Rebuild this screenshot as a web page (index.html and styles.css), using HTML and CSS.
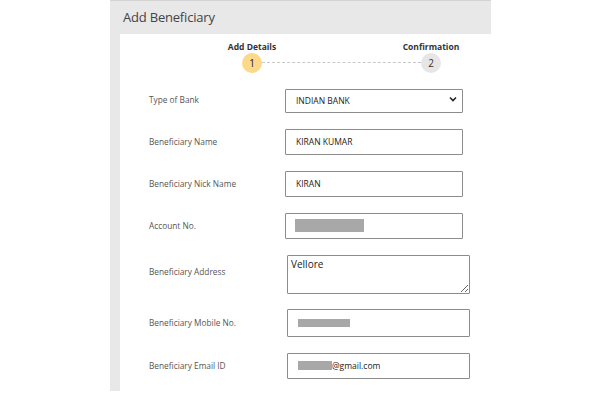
FILE: index.html
```html
<!DOCTYPE html>
<html>
<head>
<meta charset="utf-8">
<link rel="stylesheet" href="styles.css">
</head>
<body>
<div class="page">
  <div class="header"><h1 class="title">Add Beneficiary</h1></div>
  <div class="main">
    <div class="stepper">
      <div class="step">
        <div class="step-label">Add Details</div>
        <div class="step-circle active">1</div>
      </div>
      <div class="step-line"></div>
      <div class="step">
        <div class="step-label">Confirmation</div>
        <div class="step-circle">2</div>
      </div>
    </div>
    <form class="form">
      <div class="row r-bank">
        <label class="label">Type of Bank</label>
        <div class="select-wrap">
          <select class="field select"><option>INDIAN BANK</option></select>
          <svg class="chev" width="8" height="6" viewBox="0 0 8 6"><path d="M1 1.5 L4 4.5 L7 1.5" fill="none" stroke="#222" stroke-width="1.6"/></svg>
        </div>
      </div>
      <div class="row">
        <label class="label">Beneficiary Name</label>
        <div class="field input">KIRAN KUMAR</div>
      </div>
      <div class="row">
        <label class="label">Beneficiary Nick Name</label>
        <div class="field input">KIRAN</div>
      </div>
      <div class="row">
        <label class="label">Account No.</label>
        <div class="field input"><span class="mask mask-acc"></span></div>
      </div>
      <div class="row r-addr">
        <label class="label">Beneficiary Address</label>
        <textarea class="field textarea">Vellore</textarea>
      </div>
      <div class="row r-mob">
        <label class="label">Beneficiary Mobile No.</label>
        <div class="field input wide tall"><span class="mask mask-mob"></span></div>
      </div>
      <div class="row r-mail">
        <label class="label">Beneficiary Email ID</label>
        <div class="field input wide"><span class="mask mask-mail"></span>@gmail.com</div>
      </div>
    </form>
  </div>
</div>
</body>
</html>
```
FILE: styles.css
```css
* { box-sizing: border-box; }
html, body { margin: 0; padding: 0; background: #fff; }
body { font-family: "Open Sans", "Noto Sans", sans-serif; color: #333; }

.page { margin-left: 110px; width: 490px; }

.header {
  width: 381px;
  height: 34px;
  background: #e8e8e8;
  border-top: 1px solid #d4d4d4;
  padding: 7px 0 0 13px;
}
.title {
  margin: 0;
  font-weight: 400;
  font-size: 13px;
  letter-spacing: -0.2px;
  line-height: 18px;
  color: #444;
}

.main {
  height: 357px;
  border-left: 10px solid #e8e8e8;
  padding-top: 7px;
}

.stepper {
  position: relative;
  display: flex;
  margin-left: 92px;
  width: 259px;
}
.step {
  width: 80px;
  display: flex;
  flex-direction: column;
  align-items: center;
  position: relative;
  z-index: 1;
}
.step-line {
  flex: 1;
  align-self: flex-end;
  height: 11px;
  margin: 0 -30px;
  border-top: 1px dashed #c8c8c8;
}
.step-label {
  font-size: 8.5px;
  font-weight: 700;
  color: #333;
  line-height: 11px;
}
.step-circle {
  margin-top: 1px;
  width: 20px;
  height: 20px;
  border-radius: 50%;
  background: #e6e6e6;
  color: #333;
  font-size: 10px;
  display: flex;
  align-items: center;
  justify-content: center;
}
.step-circle.active { background: #fcd98a; color: #222; }

.form {
  margin-top: 14px;
  padding-left: 29px;
  display: flex;
  flex-direction: column;
  gap: 16px;
}
.row {
  display: flex;
  align-items: center;
}
.label {
  width: 136px;
  font-size: 8.3px;
  color: #555;
}
.field {
  font-family: "Open Sans", "Noto Sans", sans-serif;
  border: 1px solid #8c8c8c;
  border-radius: 1px;
  background: #fff;
  color: #222;
}
.input {
  width: 178px;
  height: 26px;
  font-size: 8.5px;
  display: flex;
  align-items: center;
  padding-left: 10px;
}
.input.wide { width: 183px; margin-left: 2px; }
.input.tall { height: 28px; }

.select-wrap { position: relative; }
.select {
  appearance: none;
  -webkit-appearance: none;
  width: 178px;
  height: 24px;
  font-size: 8.5px;
  padding: 0 0 0 10px;
  outline: none;
}
.chev { position: absolute; right: 6px; top: 9px; }

.r-addr .label { align-self: flex-start; margin-top: 11px; }
.textarea {
  width: 183px;
  height: 39px;
  margin-left: 2px;
  font-size: 10px;
  padding: 2px 3px;
  resize: vertical;
  line-height: 12px;
}
.r-mob { margin-top: -1px; }

.mask {
  display: inline-block;
  background: #a8a8a8;
}
.mask-acc { width: 69px; height: 13px; margin-left: -1px; }
.mask-mob { width: 52px; height: 8px; }
.mask-mail { width: 34px; height: 9px; }
```
